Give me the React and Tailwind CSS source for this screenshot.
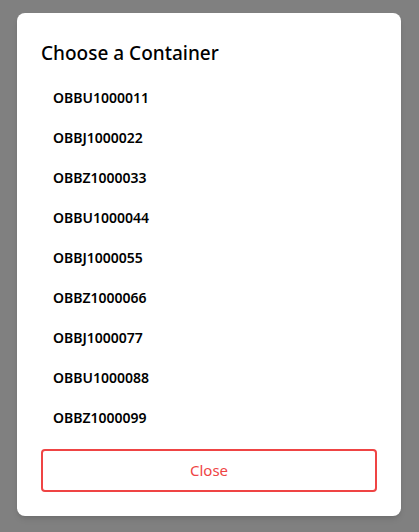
export default function App() {
  const items = [
    "OBBU1000011",
    "OBBJ1000022",
    "OBBZ1000033",
    "OBBU1000044",
    "OBBJ1000055",
    "OBBZ1000066",
    "OBBJ1000077",
    "OBBU1000088",
    "OBBZ1000099",
  ];
  return (
    <div
      className="w-[419px] h-[532px] bg-[#808080] flex items-start justify-start pt-[13px] pl-[17px]"
      style={{ fontFamily: '"Noto Sans", "Open Sans", sans-serif' }}
    >
      <div className="w-[384px] h-[503px] bg-white rounded-lg p-6 flex flex-col shadow-md">
        <h2 className="h-8 flex items-center text-[19px] font-medium text-black mb-[9px]">
          Choose a Container
        </h2>
        <ul className="flex flex-col">
          {items.map((it) => (
            <li key={it} className="h-10 flex items-center px-3 text-[14px] font-semibold text-black">
              {it}
            </li>
          ))}
        </ul>
        <button className="mt-[11px] h-11 w-full border-2 border-[#ef4444] rounded-[4px] text-[#ef4444] text-[15px] bg-white">
          Close
        </button>
      </div>
    </div>
  );
}
